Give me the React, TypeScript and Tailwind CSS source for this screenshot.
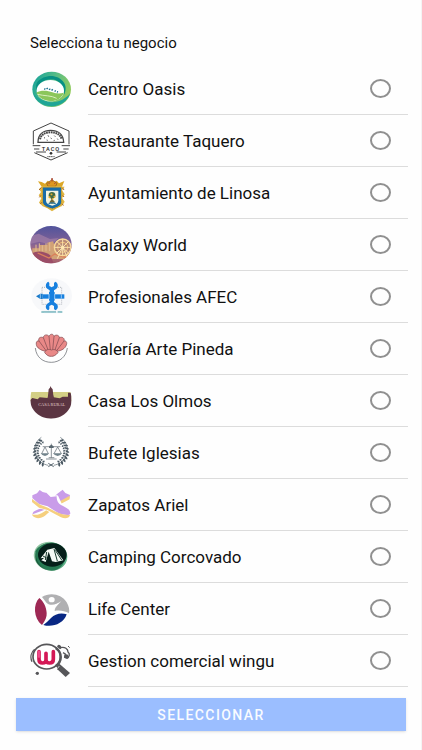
import { useState, type ReactNode } from 'react';

type Business = { id: string; name: string; viewBox: string; logo: ReactNode };

const LEAVES = [0, 1, 2, 3, 4, 5, 6, 7, 8, 9];

const businesses: Business[] = [
  {
    id: 'oasis',
    name: 'Centro Oasis',
    viewBox: '30 27 126 120',
    logo: (
      <>
        <defs>
          <linearGradient id="oasisRing" x1="0" y1="0.2" x2="1" y2="0.6">
            <stop offset="0" stopColor="#16a39a" />
            <stop offset="0.5" stopColor="#58bd85" />
            <stop offset="1" stopColor="#96cc5c" />
          </linearGradient>
        </defs>
        <ellipse cx="95" cy="88" rx="58" ry="53" fill="url(#oasisRing)" />
        <path d="M40 100C48 130 80 143 106 138C132 133 148 114 150 100C138 118 110 130 88 126C62 122 50 112 40 100Z" fill="#1fa596" />
        <path d="M52 66C72 44 112 40 132 68C140 80 137 96 132 104C132 80 118 58 92 58C72 58 58 68 50 90C47 82 48 72 52 66Z" fill="#079184" />
        <ellipse cx="91" cy="92" rx="41" ry="32" fill="#fff" />
        <path d="M49 98C62 90 82 91 97 97C111 102 123 101 131 98C125 115 109 124 90 123C72 122 57 113 49 98Z" fill="#8bc65b" />
        <path d="M53 103C72 108 94 106 110 115" fill="none" stroke="#d9efbf" strokeWidth="3" />
        <path d="M73 86l3 2M80 84l3 3M88 86l2 3M95 88l3 3M104 92l3 2M111 95l3 1" stroke="#176e8d" strokeWidth="5" />
      </>
    ),
  },
  {
    id: 'taquero',
    name: 'Restaurante Taquero',
    viewBox: '30 183 126 120',
    logo: (
      <>
        <path d="M40 253V213L93 189L147 213V253M43 278L93 300L143 278" fill="none" stroke="#444" strokeWidth="3" />
        <path d="M54 247C54 222 71 211 92 211S130 222 131 247Z" fill="#fff" stroke="#444" strokeWidth="4" />
        <path d="M60 238C64 222 77 217 93 217S121 223 125 238" fill="none" stroke="#444" strokeWidth="6" strokeDasharray="5 2" />
        <path d="M72 233l3 1M84 226l2 4M92 234l3 2M103 227l3 3M112 236l2 3M80 240l3 1M101 242l3-1" stroke="#444" strokeWidth="3" />
        <path d="M38 257H61M125 257H150M42 267H58M130 267H146M48 276H78M110 276H138" stroke="#444" strokeWidth="3" />
        <text x="93" y="272" textAnchor="middle" fontSize="17" letterSpacing="3" fontWeight="500" fill="#222">TACO</text>
        <circle cx="93" cy="280" r="4" fill="#333" />
        <path d="M82 290H104" stroke="#555" strokeWidth="3" strokeDasharray="4 1" />
      </>
    ),
  },
  {
    id: 'linosa',
    name: 'Ayuntamiento de Linosa',
    viewBox: '30 24 126 120',
    logo: (
      <>
        <path d="M65 65L54 49L65 51L75 56L83 47L90 51L96 41L102 51L110 47L117 55L133 48L126 65Z" fill="#dca726" />
        <path d="M80 55L96 44L111 55L107 64H84Z" fill="#dd9820" stroke="#85511d" strokeWidth="2" />
        <path d="M94 42h5M96 39v11M86 57l4-5M103 57l4-5" stroke="#ac4736" strokeWidth="3" />
        <path d="M66 64L57 72L63 81L56 91L64 100L57 113L68 124L81 129L96 139L112 129L126 123L134 110L126 99L134 88L126 76L134 65Z" fill="#e1b641" />
        <path d="M64 68L57 75M63 91L58 97M65 112L61 117M128 69L132 75M128 91L132 96M125 116L131 121" stroke="#a96727" strokeWidth="3" />
        <path d="M67 66H125V110C125 122 113 127 97 132C79 127 67 121 67 108Z" fill="#186ca7" stroke="#d7a630" strokeWidth="3" />
        <path d="M78 77H115V106C115 115 109 119 97 122C84 119 78 115 78 106Z" fill="#f4f4df" />
        <path d="M96 116V96M90 113L96 105L103 113" stroke="#6f6939" strokeWidth="5" fill="none" />
        <circle cx="96" cy="91" r="10" fill="#426b43" />
        <path d="M86 95l5 3M92 87l5 2M101 94l5 3M96 101l4 2" stroke="#e3ad35" strokeWidth="5" />
        <path d="M86 116Q96 111 107 116" fill="none" stroke="#27739c" strokeWidth="4" />
      </>
    ),
  },
  {
    id: 'galaxy',
    name: 'Galaxy World',
    viewBox: '30 180 126 120',
    logo: (
      <>
        <defs>
          <linearGradient id="galaxySky" x1="0" y1="0" x2="0" y2="1">
            <stop offset="0" stopColor="#4e539c" />
            <stop offset="0.45" stopColor="#806196" />
            <stop offset="0.75" stopColor="#bd7779" />
            <stop offset="1" stopColor="#975568" />
          </linearGradient>
          <clipPath id="galaxyClip"><ellipse cx="93" cy="239" rx="62" ry="56" /></clipPath>
        </defs>
        <g clipPath="url(#galaxyClip)">
          <rect x="30" y="180" width="126" height="120" fill="url(#galaxySky)" />
          <path d="M30 213L56 206L90 222L116 219L94 239L58 230L30 237Z" fill="#a27fa7" opacity="0.7" />
          <path d="M37 250H58V240H82V233L99 229L106 249L155 243V282H37Z" fill="#d1a176" />
          <path d="M48 239v20M58 235v24M67 241v18M78 235v24M89 232v26" stroke="#e1bc91" strokeWidth="3" />
          <path d="M35 265Q62 252 91 271L103 300H35Z" fill="#9b4d67" />
          <path d="M53 264L87 279L104 267L142 279" fill="none" stroke="#da805b" strokeWidth="4" />
          <circle cx="128" cy="247" r="25" fill="#b98a76" stroke="#f8d898" strokeWidth="4" />
          <circle cx="128" cy="247" r="15" fill="none" stroke="#f0be7a" strokeWidth="3" />
          <path d="M128 223V271M104 247H152M111 230L145 264M145 230L111 264M128 247L112 281M128 247L144 281" stroke="#fae2ac" strokeWidth="3" />
          <circle cx="128" cy="247" r="5" fill="#ffe7b0" />
        </g>
      </>
    ),
  },
  {
    id: 'afec',
    name: 'Profesionales AFEC',
    viewBox: '30 21 126 120',
    logo: (
      <>
        <ellipse cx="95" cy="77" rx="61" ry="52" fill="#f7f8fa" />
        <rect x="66" y="52" width="59" height="51" fill="none" stroke="#8e969d" strokeWidth="2" strokeDasharray="3 3" />
        <path d="M85 35C76 39 75 51 82 56L89 61V96L82 101C75 106 76 117 85 121L88 117V108L95 104L102 108V117L106 121C115 117 116 106 109 101L102 96V61L109 56C116 51 115 39 106 35L102 39V48L95 52L88 48V39Z" fill="#1780df" />
        <path d="M48 79L61 71H68V87H61Z" fill="#1879ca" />
        <rect x="68" y="73" width="65" height="13" fill="#1780df" />
        <rect x="87" y="66" width="17" height="26" fill="#1780df" />
        <path d="M87 72v15M104 72v15M124 73v13M61 72v14" stroke="#d3eaff" strokeWidth="2" />
        <path d="M64 126H108M113 126H127" stroke="#2a8d99" strokeWidth="3" />
        <path d="M72 128H121" stroke="#bddce5" strokeWidth="1" />
      </>
    ),
  },
  {
    id: 'pineda',
    name: 'Galería Arte Pineda',
    viewBox: '30 177 126 120',
    logo: (
      <>
        <path d="M46 234C49 263 70 277 94 277S139 260 142 234" fill="none" stroke="#565b61" strokeWidth="2" />
        <g fill="#e98887" stroke="#78454b" strokeWidth="2" strokeLinejoin="round">
          <path d="M77 244C62 241 50 233 49 224C47 216 52 211 57 213C53 204 62 199 70 203C70 195 81 191 87 199C91 190 100 191 102 199C108 192 118 196 118 203C127 199 135 205 132 213C139 211 142 218 139 225C136 235 125 242 111 244Z" />
          <path d="M57 213L79 243M70 203L85 242M87 199L91 240M102 199L98 240M118 203L104 242M132 213L109 243" fill="none" />
          <path d="M74 248C77 237 88 237 94 240C102 237 112 239 114 248C108 255 100 260 94 259C86 260 80 255 74 248Z" />
        </g>
      </>
    ),
  },
  {
    id: 'olmos',
    name: 'Casa Los Olmos',
    viewBox: '30 21 126 120',
    logo: (
      <>
        <defs><clipPath id="olmosClip"><path d="M34 53H151Q155 64 155 78C155 110 126 134 93 134S31 110 31 78Q31 64 34 53Z" /></clipPath></defs>
        <g clipPath="url(#olmosClip)">
          <path d="M30 53H155V82H30Z" fill="#d3cf85" />
          <path d="M30 79L37 72L53 76L59 70L83 72L85 62H99L101 70L119 73L128 68H144V56H155V137H30Z" fill="#5b3542" />
        </g>
        <path d="M83 74L86 46L90 41L91 36L94 41L98 46L101 74Z" fill="#633b45" />
        <text x="95" y="96" textAnchor="middle" fontFamily="Liberation Serif" fontSize="13" fill="#e1cfcb">CASA RURAL</text>
      </>
    ),
  },
  {
    id: 'bufete',
    name: 'Bufete Iglesias',
    viewBox: '30 177 126 120',
    logo: (
      <>
        <path d="M64 190C42 206 39 229 49 247C56 262 69 271 85 274M121 190C144 206 147 229 137 247C130 262 117 271 101 274" fill="none" stroke="#52606a" strokeWidth="2" />
        {LEAVES.map((leaf) => {
          const angle = 2.25 + leaf * 0.21;
          const angleDegrees = (-angle * 180) / Math.PI;
          return (
            <g key={leaf} fill="#4b5963">
              {[-1, 1].map((side) => (
                <g key={side} transform={side === 1 ? 'translate(186 0) scale(-1 1)' : undefined}>
                  <g transform={`translate(${93 + 46 * Math.cos(angle)} ${233 - 42 * Math.sin(angle)}) rotate(${angleDegrees})`}>
                    <path d="M-5 3Q1 -9 9 -5Q6 3 -5 3ZM0 3Q-7 -5 -10 0Q-7 6 0 3Z" />
                  </g>
                </g>
              ))}
            </g>
          );
        })}
        <path d="M94 209V251M68 218H121M86 251H103M78 255H110M75 219L65 239M75 219L85 239M113 219L102 239M113 219L124 239" fill="none" stroke="#56616a" strokeWidth="2" />
        <path d="M87 217L94 212L101 217V222H87Z" fill="#596770" />
        <path d="M62 238H87Q83 246 75 246T62 238ZM99 238H126Q121 246 113 246T99 238Z" fill="#71838b" />
        <path d="M85 268L101 278M101 268L85 278" stroke="#52606a" strokeWidth="3" />
      </>
    ),
  },
  {
    id: 'ariel',
    name: 'Zapatos Ariel',
    viewBox: '30 18 126 120',
    logo: (
      <>
        <path d="M112 44L128 32L136 42L150 48L148 57L116 73L80 90L38 106C37 101 41 97 49 94L66 86Z" fill="#c99ce9" />
        <path d="M36 106C48 110 61 106 72 98L114 70L149 50L149 61L106 83L75 110C62 121 39 120 36 106Z" fill="#f5cf7e" />
        <path d="M37 49L51 43L59 33L76 43L92 55L111 53L122 77C132 87 149 91 151 103L150 114C144 121 131 119 123 115L82 91L57 84L36 66Z" fill="#fff" stroke="#fff" strokeWidth="8" strokeLinejoin="round" />
        <path d="M37 49L51 43L59 33Q69 42 79 41L92 54L110 52C109 63 115 74 123 78C134 84 151 89 151 104C149 110 130 108 116 103L83 82L57 75L37 57Z" fill="#c99ce9" />
        <path d="M36 60L61 77L84 86C104 97 125 109 150 108C148 119 134 120 123 115L82 93L57 86L36 69Z" fill="#f5cf7e" />
      </>
    ),
  },
  {
    id: 'camping',
    name: 'Camping Corcovado',
    viewBox: '30 174 126 120',
    logo: (
      <>
        <defs>
          <linearGradient id="campGreen">
            <stop offset="0" stopColor="#145536" />
            <stop offset="1" stopColor="#68bb94" />
          </linearGradient>
        </defs>
        <ellipse cx="91" cy="232" rx="50" ry="43" fill="#91c5a3" transform="rotate(16 91 232)" />
        <ellipse cx="94" cy="233" rx="48" ry="42" fill="url(#campGreen)" />
        <path d="M46 217C60 190 112 178 132 212C145 232 132 264 107 273C74 278 45 254 46 217Z" fill="#267952" />
        <ellipse cx="97" cy="228" rx="43" ry="35" fill="#051f19" />
        <path d="M82 212L103 207L130 244L107 249L96 247L86 218L77 249L64 244L73 236L62 238Z" fill="#f4faf5" />
        <path d="M102 210L112 246M80 219L76 243M69 231L80 237M106 214L125 243" stroke="#173b2d" strokeWidth="3" />
      </>
    ),
  },
  {
    id: 'life',
    name: 'Life Center',
    viewBox: '30 24 126 120',
    logo: (
      <>
        <path d="M58 51C39 68 40 112 66 132C76 119 81 107 80 96C79 77 70 60 58 51Z" fill="#9e2854" />
        <path d="M66 48C90 33 125 39 140 64C147 76 149 87 147 97C134 90 119 87 104 90C104 80 113 72 124 61C110 70 97 75 84 69C76 63 72 55 66 48Z" fill="#b0b0b2" />
        <path d="M140 100C122 94 105 99 93 111C86 119 78 126 70 132C96 140 131 129 140 100Z" fill="#082783" />
        <ellipse cx="95" cy="56" rx="9" ry="8" fill="#fff" />
        <path d="M60 49C68 61 77 72 88 74C103 77 114 68 126 58C112 71 99 81 98 92C90 98 85 108 78 118C84 100 85 88 79 77C73 66 66 57 60 49Z" fill="#fff" />
      </>
    ),
  },
  {
    id: 'wingu',
    name: 'Gestion comercial wingu',
    viewBox: '30 180 126 120',
    logo: (
      <>
        <path d="M111 197Q114 187 122 194Q127 201 120 205" fill="#565659" />
        <path d="M121 200C135 196 144 204 144 213C151 218 148 228 141 232L134 229L136 219L129 215" fill="none" stroke="#565659" strokeWidth="4" />
        <path d="M144 195l5 5" stroke="#565659" strokeWidth="3" />
        <circle cx="139" cy="226" r="6" fill="#565659" />
        <path d="M44 205C33 214 30 229 36 242" fill="none" stroke="#565659" strokeWidth="4" />
        <circle cx="52" cy="277" r="5" fill="#565659" />
        <path d="M109 252L118 248L150 276L137 288L112 265Z" fill="#565659" />
        <path d="M118 255L112 263" stroke="#fff" strokeWidth="2" />
        <ellipse cx="80" cy="227" rx="41" ry="37" fill="#fff" stroke="#565659" strokeWidth="5" />
        <path d="M107 201C128 215 127 243 107 255" fill="none" stroke="#565659" strokeWidth="7" />
        <path d="M57 212V235Q57 246 67 246Q78 246 78 236V217V236Q78 246 89 246Q100 246 100 235V212" fill="none" stroke="#d41856" strokeWidth="11" strokeLinecap="round" strokeLinejoin="round" />
        <path d="M57 212V227" stroke="#ef498a" strokeWidth="7" strokeLinecap="round" />
      </>
    ),
  },
];

export default function App() {
  const [selected, setSelected] = useState('');

  return (
    <main className="min-h-screen border-r border-[#f4f4f4] bg-[#fefefe] pt-8 font-['Roboto','Noto_Sans',sans-serif] text-[#111]">
      <form onSubmit={(event) => event.preventDefault()}>
        <fieldset>
          <legend className="px-[30px] text-[15px] leading-[22px]">Selecciona tu negocio</legend>
          <div className="mt-[9px] pr-[13px] pl-[30px]">
            {businesses.map((business) => (
              <label key={business.id} htmlFor={business.id} className="flex h-[52px] cursor-pointer items-center">
                <svg aria-hidden="true" viewBox={business.viewBox} className="h-10 w-[42px] shrink-0">
                  {business.logo}
                </svg>
                <span className="ml-4 flex h-full flex-1 items-center justify-between border-b border-[#dcdcdc] pr-[17px]">
                  <span className="text-[17px] leading-6">{business.name}</span>
                  <input
                    id={business.id}
                    type="radio"
                    name="business"
                    checked={selected === business.id}
                    onChange={() => setSelected(business.id)}
                    className="h-[19px] w-[21px] appearance-none rounded-[50%] border-2 border-[#909090] checked:border-[6px] checked:border-[#4589f4]"
                  />
                </span>
              </label>
            ))}
          </div>
        </fieldset>
        <div className="mt-[11px] pr-[15px] pl-4">
          <button type="submit" className="block h-[33px] w-full bg-[#9bbeff] text-sm leading-5 font-medium tracking-widest text-[#f8fbff] shadow">
            SELECCIONAR
          </button>
        </div>
      </form>
    </main>
  );
}
